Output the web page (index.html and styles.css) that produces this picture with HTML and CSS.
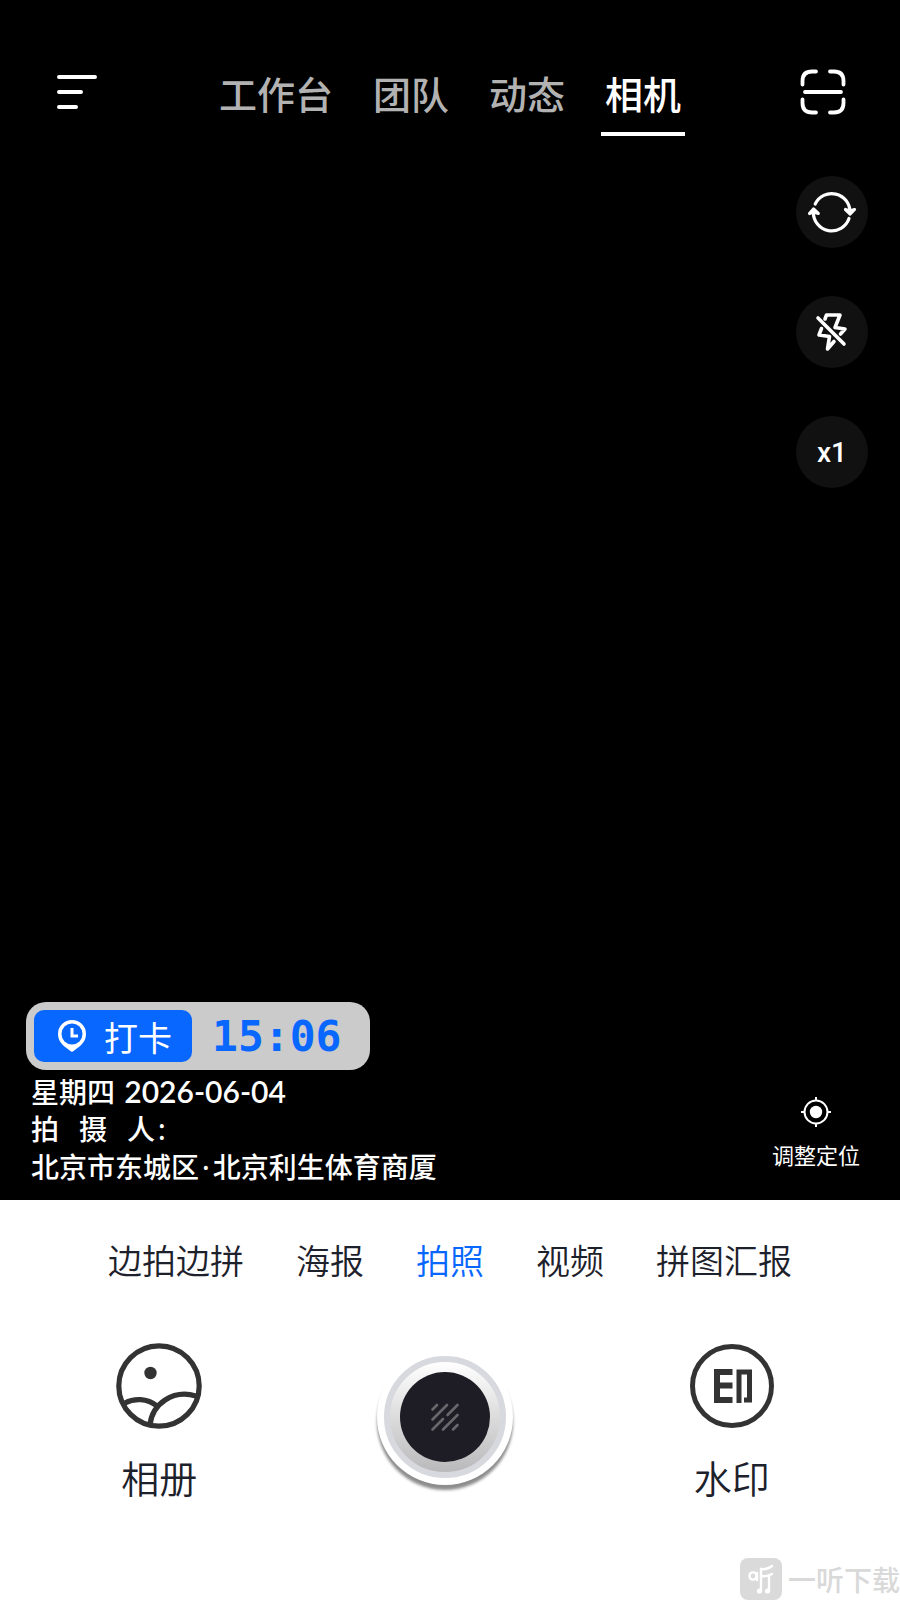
FILE: index.html
```html
<!DOCTYPE html>
<html lang="zh-CN">
<head>
  <meta charset="UTF-8">
  <meta name="viewport" content="width=device-width, initial-scale=1.0">
  <title>相机</title>
  <link rel="stylesheet" href="styles.css">
</head>
<body>
  <div class="app">
    <main class="camera">
      <header class="top-bar">
        <button class="icon-button" aria-label="菜单">
          <svg width="44" height="36" viewBox="0 0 44 36" fill="none" stroke="#fff" stroke-width="4" stroke-linecap="round">
            <path d="M3 3H39M3 18H25M3 33H20"/>
          </svg>
        </button>
        <nav class="tabs">
          <a href="#">工作台</a>
          <a href="#">团队</a>
          <a href="#">动态</a>
          <a href="#" class="active">相机</a>
        </nav>
        <button class="icon-button" aria-label="扫一扫">
          <svg width="46" height="46" viewBox="0 0 46 46" fill="none" stroke="#fff" stroke-width="3.800" stroke-linecap="round">
            <path d="M2.500 15.500V12Q2.500 2.500 12 2.500H16M30 2.500H34Q43.500 2.500 43.500 12V15.500M43.500 30.500V34Q43.500 43.500 34 43.500H30M16 43.500H12Q2.500 43.500 2.500 34V30.500M5 23H41"/>
          </svg>
        </button>
      </header>

      <!-- Camera tools -->
      <div class="tools">
        <button class="tool" aria-label="切换镜头">
          <svg width="48" height="42" viewBox="0 0 48 42" fill="none" stroke="#fff" stroke-width="3.200" stroke-linecap="round" stroke-linejoin="round">
            <path d="M7.200 13A18.300 18.300 0 0 1 42 21M41 27.500A18.300 18.300 0 0 1 5.400 21"/>
            <path d="M37.500 18.500L42.200 23L46.500 18.500L42.200 20Z M1.500 22.500L5.500 18L10.300 22.500L5.500 21Z" fill="#fff"/>
          </svg>
        </button>
        <button class="tool" aria-label="闪光灯关闭">
          <svg width="32" height="40" viewBox="0 0 32 40" fill="none" stroke="#fff" stroke-width="3.600" stroke-linecap="round" stroke-linejoin="round">
            <path d="M9 7L10.500 3H24L19 15.500L29 17L24.500 22M5.500 16.500L3 23L13.500 24.500L11.500 37L18 29.500M2 6L28 32"/>
          </svg>
        </button>
        <button class="tool">x1</button>
      </div>

      <div class="camera-footer">
        <section class="stamp">
          <div class="clock">
            <span class="clock-label">
              <svg width="30" height="34" viewBox="0 0 30 34">
                <path d="M15 1A14 14 0 0 0 1 15C1 24 8 28 15 33C22 28 29 24 29 15A14 14 0 0 0 15 1Z" fill="#fff"/>
                <circle cx="15" cy="15" r="10.500" fill="#0867ff"/>
                <path d="M15 9V17H21" fill="none" stroke="#fff" stroke-width="3"/>
              </svg>
              打卡
            </span>
            <time class="clock-time">15:06</time>
          </div>
          <p>星期四 <span class="date">2026-06-04</span></p>
          <p class="author"><span>拍</span><span>摄</span><span>人<span class="mark">:</span></span></p>
          <p>北京市东城区<span class="mark">·</span>北京利生体育商厦</p>
        </section>
        <button class="locate">
          <svg width="30" height="30" viewBox="0 0 30 30" fill="none" stroke="#fff" stroke-width="2">
            <circle cx="15" cy="15" r="11.500"/>
            <circle cx="15" cy="15" r="6.200" fill="#fff" stroke="none"/>
            <path d="M15 0V4M15 26V30M0 15H4M26 15H30"/>
          </svg>
          调整定位
        </button>
      </div>
    </main>

    <footer class="panel">
      <nav class="modes">
        <a href="#">边拍边拼</a>
        <a href="#">海报</a>
        <a href="#" class="active">拍照</a>
        <a href="#">视频</a>
        <a href="#">拼图汇报</a>
      </nav>
      <div class="actions">
        <button class="action">
          <svg width="86" height="86" viewBox="0 0 86 86" fill="none" stroke="#333" stroke-width="5.200">
            <circle cx="43" cy="43" r="40.200"/>
            <path d="M9 60C18 55 31 55 41 63M34 82C36 61 57 46 80 53"/>
            <circle cx="34.500" cy="30" r="6.200" fill="#333" stroke="none"/>
          </svg>
          相册
        </button>
        <button class="shutter" aria-label="拍摄">
          <span class="shutter-ring">
            <span class="shutter-core">
              <svg width="28" height="28" viewBox="0 0 28 28" stroke="#68676c" stroke-width="2.600" stroke-linecap="round">
                <path d="M1.500 6.500L6 2M1.500 16.500L16 2M1.500 26.500L12 16M16.500 12L26.500 2M12 26.500L26.500 12M22 26.500L26.500 22"/>
              </svg>
            </span>
          </span>
        </button>
        <button class="action">
          <svg width="86" height="86" viewBox="0 0 86 86" fill="none" stroke="#333" stroke-width="5">
            <circle cx="43" cy="43" r="39.500"/>
            <g stroke-width="6">
              <path d="M43.500 29H28V57H43.500M28 42.500H43.500"/>
              <path d="M50 60V29H60.500V57H55" stroke-width="5"/>
            </g>
          </svg>
          水印
        </button>
      </div>
      <div class="watermark">
        <svg width="42" height="42" viewBox="0 0 42 42">
          <rect width="42" height="42" rx="8" fill="#dadada"/>
          <g fill="none" stroke="#fff" stroke-width="2.400" stroke-linecap="round">
            <circle cx="13" cy="18" r="3.600"/>
            <path d="M17 15V22M21 33V11Q27 12 32 8M21 18Q27 19 32 16M29 18V32"/>
          </g>
          <circle cx="19.500" cy="33" r="2.600" fill="#fff"/>
          <circle cx="27.500" cy="33" r="2.600" fill="#fff"/>
        </svg>
        一听下载
      </div>
    </footer>
  </div>
</body>
</html>
```
FILE: styles.css
```css
* {
  box-sizing: border-box;
}

body {
  margin: 0;
  background-color: #fff;
  color: #1d212b;
  font-family: "Noto Sans CJK SC", sans-serif;
}

a {
  color: inherit;
  text-decoration: none;
}

button {
  padding: 0;
  border: none;
  background: none;
  color: inherit;
  font-family: inherit;
  cursor: pointer;
}

svg {
  display: block;
  overflow: visible;
}

.app {
  display: flex;
  flex-direction: column;
  min-height: 100vh;
}

/* Camera preview */
.camera {
  flex: 1;
  display: flex;
  flex-direction: column;
  background-color: #000;
  color: #fff;
}

.top-bar {
  display: flex;
  justify-content: space-between;
  align-items: flex-start;
  padding: 64px 54px 0 56px;
}

.icon-button {
  display: flex;
  align-items: center;
  height: 56px;
}

.tabs {
  display: flex;
  gap: 32px;
}

.tabs a {
  padding: 0 4px 10px;
  color: #b2b2b2;
  font-size: 38px;
  font-weight: 500;
  line-height: 58px;
}

.tabs .active {
  border-bottom: 4px solid #fff;
  color: #fff;
}

.tools {
  display: flex;
  flex-direction: column;
  align-items: flex-end;
  gap: 48px;
  padding: 40px 32px;
}

.tool {
  display: flex;
  justify-content: center;
  align-items: center;
  width: 72px;
  height: 72px;
  border-radius: 50%;
  background-color: #111;
  font-family: Roboto, sans-serif;
  font-size: 28px;
  font-weight: 500;
}

.camera-footer {
  display: flex;
  justify-content: space-between;
  align-items: flex-end;
  margin-top: auto;
  padding: 0 40px 14px 26px;
}

.clock {
  display: inline-flex;
  align-items: center;
  padding: 8px 29px 8px 8px;
  margin-bottom: 3px;
  border-radius: 20px;
  background-color: #cbcbcb;
}

.clock-label {
  display: flex;
  align-items: center;
  gap: 17px;
  height: 52px;
  padding: 0 20px 0 23px;
  border-radius: 10px;
  background-color: #0867ff;
  font-size: 34px;
}

.clock-time {
  margin-left: 20px;
  color: #0867ff;
  font-family: "DejaVu Sans Mono", monospace;
  font-size: 43px;
  font-weight: bold;
  line-height: 48px;
}

.stamp p {
  margin: 0 0 0 5px;
  font-size: 28px;
  font-weight: 500;
  line-height: 37px;
}

.stamp .author {
  display: flex;
  gap: 20px;
}

.date {
  margin-left: 3px;
  font-family: Lato, sans-serif;
  font-size: 30px;
  font-weight: 600;
}

.mark {
  margin: 0 3px;
  font-family: "Noto Sans", sans-serif;
}

.locate {
  display: flex;
  flex-direction: column;
  align-items: center;
  gap: 11px;
  margin-bottom: 16px;
  font-size: 22px;
  line-height: 32px;
}

/* Bottom panel */
.panel {
  position: relative;
  padding: 36px 0 95px;
}

.modes {
  display: flex;
  justify-content: center;
  gap: 52px;
  font-size: 34px;
  font-weight: 350;
  line-height: 48px;
}

.modes .active {
  color: #0867ff;
}

.actions {
  display: grid;
  grid-template-columns: repeat(3, 1fr);
  justify-items: center;
  align-items: start;
  padding: 59px 25px 0 16px;
}

.action {
  display: flex;
  flex-direction: column;
  align-items: center;
  gap: 20px;
  font-size: 38px;
  font-weight: 350;
  line-height: 56px;
}

.shutter {
  padding: 7px;
  margin-top: 6px;
  border-radius: 50%;
  background-color: #fff;
  box-shadow: 0 5px 3px rgba(0, 0, 0, 0.45);
}

.shutter-ring {
  display: flex;
  justify-content: center;
  align-items: center;
  width: 122px;
  height: 122px;
  border: 6px solid #d8d9de;
  border-radius: 50%;
  background: linear-gradient(#fff, #b9b9bb);
}

.shutter-core {
  display: flex;
  justify-content: center;
  align-items: center;
  width: 90px;
  height: 90px;
  border-radius: 50%;
  background-color: #1e1d25;
}

.watermark {
  position: absolute;
  right: 0;
  bottom: 0;
  display: flex;
  align-items: center;
  gap: 6px;
  color: #d9d9d9;
  font-size: 28px;
  font-weight: 500;
  line-height: 42px;
}
```
